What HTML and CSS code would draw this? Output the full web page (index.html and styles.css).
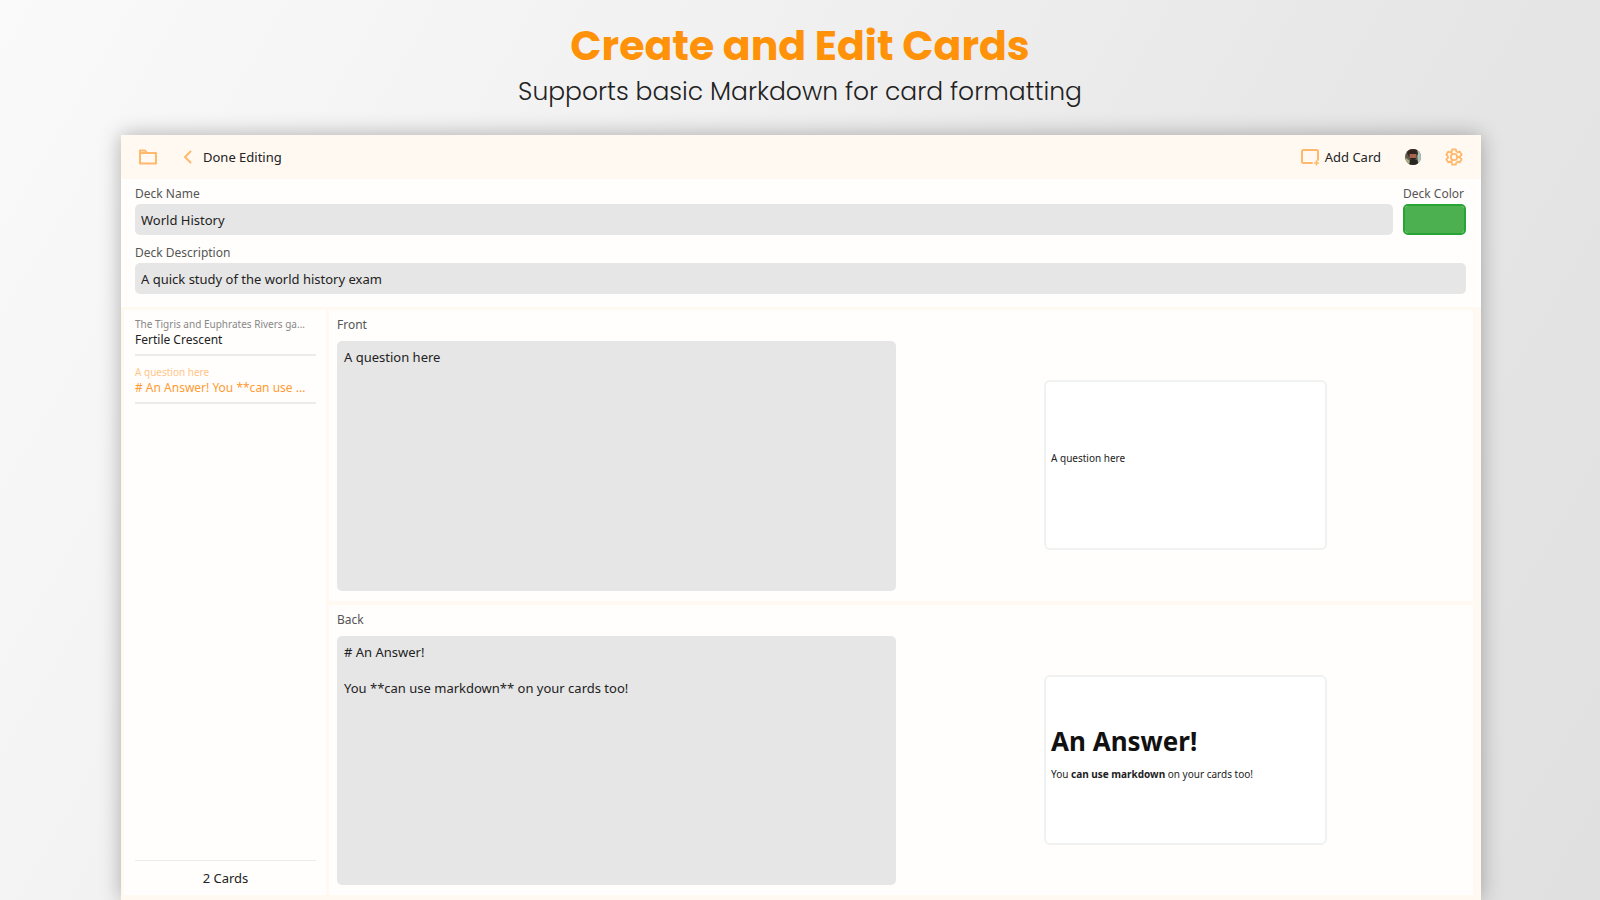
FILE: index.html
```html
<!DOCTYPE html>
<html lang="en">
<head>
<meta charset="utf-8">
<meta name="viewport" content="width=device-width, initial-scale=1">
<title>Create and Edit Cards</title>
<link rel="stylesheet" href="styles.css">
</head>
<body>
<header class="hero">
  <h1 class="hero-title">Create and Edit Cards</h1>
  <p class="hero-sub">Supports basic Markdown for card formatting</p>
</header>
<main class="window">
  <nav class="toolbar">
    <button class="tool" type="button" aria-label="Decks">
      <svg width="20" height="18" viewBox="0 0 20 18" fill="none" stroke="currentColor" stroke-width="2" stroke-linejoin="round"><path d="M2 15.500V2.500h5l2 2.500h9v10.500z"/><path d="M2 5h8"/></svg>
    </button>
    <button class="tool tool-back" type="button">
      <svg width="10" height="16" viewBox="0 0 10 16" fill="none" stroke="currentColor" stroke-width="2" stroke-linecap="round" stroke-linejoin="round"><path d="M7.500 2.500 2 8l5.500 5.500"/></svg>
      <span>Done Editing</span>
    </button>
    <span class="spacer"></span>
    <button class="tool tool-add" type="button">
      <svg width="20" height="18" viewBox="0 0 20 18" fill="none" stroke="currentColor" stroke-width="2" stroke-linecap="round" stroke-linejoin="round"><path d="M12 15H3.500A1.500 1.500 0 0 1 2 13.500v-10A1.500 1.500 0 0 1 3.500 2h13A1.500 1.500 0 0 1 18 3.500V12"/><path d="M14.500 15h4M16.500 13v4" stroke-width="1.500"/></svg>
      <span>Add Card</span>
    </button>
    <button class="tool tool-avatar" type="button" aria-label="Account">
      <svg width="16" height="16" viewBox="0 0 16 16"><defs><clipPath id="round"><circle cx="8" cy="8" r="8"/></clipPath></defs><g clip-path="url(#round)"><path fill="#65594d" d="M0 0h16v16H0z"/><path fill="#a9c5bd" d="M12 2h4v12h-3z"/><path fill="#342820" d="M3 0h9l1 5-2 3H4L2 4z"/><ellipse cx="8" cy="6.500" rx="3.500" ry="4" fill="#a76451"/><path fill="#30241f" d="M4 3q4-3 8 1L11 5H5zM5 9h6v1l-3 2-3-2z"/><path fill="#a5b284" d="M1 9l4 3v4H1z"/><path fill="#292522" d="M5 11h7l2 5H4z"/></g></svg>
    </button>
    <button class="tool" type="button" aria-label="Settings">
      <svg width="18" height="18" viewBox="0 0 20 20" fill="none" stroke="currentColor" stroke-width="2" stroke-linejoin="round"><path d="M8 1.500h4l.6 2.300 1.600 1 2.300-.7 2 3.400L16.800 9v2l1.700 1.500-2 3.400-2.300-.7-1.600 1-.6 2.300H8l-.6-2.300-1.600-1-2.300.7-2-3.400L3.200 11V9L1.500 7.500l2-3.400 2.300.7 1.600-1z"/><circle cx="10" cy="10" r="3.500"/><path d="M13.500 10H17M8.300 7 6.700 4.500M8.300 13l-1.600 2.500"/></svg>
    </button>
  </nav>

  <form class="deck">
    <div class="row">
      <div class="field grow">
        <label for="name">Deck Name</label>
        <input class="text" id="name" type="text" value="World History">
      </div>
      <div class="field">
        <label for="color">Deck Color</label>
        <input class="swatch" id="color" type="color" value="#4caf50">
      </div>
    </div>
    <div class="field">
      <label for="desc">Deck Description</label>
      <input class="text" id="desc" type="text" value="A quick study of the world history exam">
    </div>
  </form>

  <div class="body">
    <aside class="side">
      <ul class="list">
        <li><a class="item" href="#fertile"><span class="q">The Tigris and Euphrates Rivers ga...</span><span class="a">Fertile Crescent</span></a></li>
        <li><a class="item active" href="#answer"><span class="q">A question here</span><span class="a"># An Answer! You **can use ...</span></a></li>
      </ul>
      <p class="count">2 Cards</p>
    </aside>
    <div class="panels">
      <section class="panel">
        <div class="editor">
          <label for="front">Front</label>
          <textarea id="front">A question here</textarea>
        </div>
        <div class="preview"><article class="card"><p>A question here</p></article></div>
      </section>
      <section class="panel">
        <div class="editor">
          <label for="back">Back</label>
          <textarea id="back"># An Answer!

You **can use markdown** on your cards too!</textarea>
        </div>
        <div class="preview"><article class="card"><h2>An Answer!</h2><p>You <strong>can use markdown</strong> on your cards too!</p></article></div>
      </section>
    </div>
  </div>
</main>
</body>
</html>
```
FILE: styles.css
```css
* {
  box-sizing: border-box;
}

body {
  margin: 0;
  height: 100vh;
  display: flex;
  flex-direction: column;
  overflow: hidden;
  background: linear-gradient(120deg, #fafafa 0%, #f0f0f0 38%, #e6e6e6 70%, #e0e0e0 100%);
  color: #222;
  font-family: "Noto Sans", "Open Sans", sans-serif;
  font-size: 13px;
  line-height: 18px;
}

h1, h2, p, ul {
  margin: 0;
  padding: 0;
}

button, input, textarea {
  font: inherit;
  color: inherit;
}

.hero {
  padding-top: 20px;
  height: 135px;
  flex: none;
  text-align: center;
  font-family: Poppins, Inter, sans-serif;
}

.hero-title {
  color: #ff9208;
  font-size: 41px;
  line-height: 52px;
  font-weight: 700;
}

.hero-sub {
  font-size: 25px;
  line-height: 40px;
  font-weight: 300;
}

.window {
  flex: 1;
  min-height: 0;
  margin: 0 119px 0 121px;
  padding-bottom: 5px;
  display: flex;
  flex-direction: column;
  background: #fff9f2;
  box-shadow: 0 0 20px rgba(0, 0, 0, 0.3);
}

.toolbar {
  height: 44px;
  flex: none;
  display: flex;
  align-items: center;
  padding: 0 18px 0 17px;
}

.tool {
  display: flex;
  align-items: center;
  padding: 0;
  border: 0;
  background: none;
}

.tool svg {
  color: #ffb86c;
}

.tool-back {
  margin-left: 25px;
  gap: 10px;
}

.tool-add {
  gap: 5px;
}

.tool-avatar {
  margin: 0 24px;
}

.spacer {
  flex: 1;
}

.deck {
  padding: 6px 15px 13px 14px;
  display: flex;
  flex-direction: column;
  gap: 9px;
  background: #fffefc;
}

.row {
  display: flex;
  gap: 10px;
}

.field {
  display: flex;
  flex-direction: column;
  gap: 1px;
}

.field label,
.editor label {
  font-size: 12px;
  color: #555;
}

.grow {
  flex: 1;
}

.text {
  width: 100%;
  height: 31px;
  padding: 0 6px;
  border: 0;
  border-radius: 5px;
  background: #e6e6e6;
}

.swatch {
  width: 63px;
  height: 31px;
  padding: 0;
  border: 2px solid #26a436;
  border-radius: 5px;
  background: #4caf50;
  appearance: none;
}

.swatch::-webkit-color-swatch-wrapper {
  padding: 0;
}

.swatch::-webkit-color-swatch {
  border: 0;
}

.body {
  flex: 1;
  min-height: 0;
  margin-top: 3px;
  padding: 0 8px 0 3px;
  display: grid;
  grid-template-columns: 202px 1fr;
  gap: 3px;
}

.side {
  display: flex;
  flex-direction: column;
  padding: 2px 10px 8px 11px;
  background: #fffefc;
}

.list {
  flex: 1;
  list-style: none;
}

.item {
  display: flex;
  flex-direction: column;
  padding: 4px 0 6px;
  margin-bottom: 4px;
  border-bottom: 2px solid #ebebeb;
  color: #222;
  font-size: 12px;
  line-height: 16px;
  text-decoration: none;
  white-space: nowrap;
}

.q {
  color: #888;
  font-size: 10px;
}

.active .q {
  color: #ffc58a;
}

.active .a {
  color: #ff9b33;
}

.count {
  padding-top: 8px;
  border-top: 1px solid #ebebeb;
  text-align: center;
}

.panels {
  min-height: 0;
  display: grid;
  grid-template-rows: 1fr 1fr;
  gap: 4px;
}

.panel {
  min-height: 0;
  display: grid;
  grid-template-columns: 1fr 1fr;
  gap: 10px;
  padding: 6px 8px 10px;
  background: #fffefc;
}

.editor {
  display: flex;
  flex-direction: column;
  gap: 7px;
}

.editor textarea {
  flex: 1;
  width: 100%;
  padding: 7px;
  border: 0;
  border-radius: 5px;
  background: #e6e6e6;
  resize: none;
}

.preview {
  display: flex;
  align-items: center;
  justify-content: center;
  padding-top: 24px;
}

.card {
  width: 283px;
  height: 170px;
  display: flex;
  flex-direction: column;
  justify-content: center;
  gap: 6px;
  padding: 0 5px 14px;
  border: 2px solid #f0f1f1;
  border-radius: 6px;
  background: #fff;
  font-size: 10px;
}

.card h2 {
  color: #111;
  font-size: 26px;
  line-height: 36px;
}
```
